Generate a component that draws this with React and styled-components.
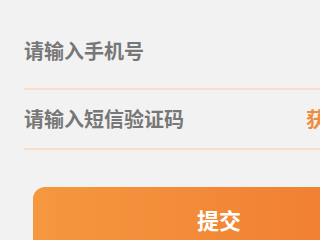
import React from 'react'
import styled, { createGlobalStyle } from 'styled-components'

const GlobalStyle = createGlobalStyle`
  html, body {
    margin: 0;
    padding: 0;
    background-color: #F2F2F2;
    overflow: hidden;
  }
`
const Page = styled.div`
  width: 430px;
  padding-top: 20px;
  background-color: #F2F2F2;
  font-family: "Noto Sans CJK SC", "Noto Sans", sans-serif;
`
const Form = styled.div`
  display: flex;
  flex-direction: column;
  padding: 0 24px;
`
const Row = styled.div`
  height: ${props => props.$height}px;
  display: flex;
  align-items: center;
  justify-content: space-between;
  border-bottom: 2px solid #F8DDCB;
  box-sizing: border-box;
  padding: ${props => props.$first ? '0 0 6px' : '0'};
`
const Placeholder = styled.span`
  font-size: 20px;
  font-weight: 700;
  color: #777777;
  line-height: 1;
`
const CodeLink = styled.span`
  font-size: 20px;
  font-weight: 700;
  color: #F08A3C;
  line-height: 1;
  white-space: nowrap;
`
const SubmitButton = styled.button`
  margin: 37px 0 0 33px;
  width: 372px;
  height: 64px;
  border: none;
  border-radius: 12px;
  background: linear-gradient(90deg, #F5983F 0%, #F0792F 100%);
  color: #FFF;
  font-family: inherit;
  font-size: 22px;
  font-weight: 700;
  display: flex;
  align-items: center;
  justify-content: center;
  padding: 0;
`

function App() {
  return (
    <Page>
      <GlobalStyle />
      <Form>
        <Row $height={70} $first>
          <Placeholder>请输入手机号</Placeholder>
        </Row>
        <Row $height={60}>
          <Placeholder>请输入短信验证码</Placeholder>
          <CodeLink>获取验证码</CodeLink>
        </Row>
      </Form>
      <SubmitButton>提交</SubmitButton>
    </Page>
  )
}

export default App
